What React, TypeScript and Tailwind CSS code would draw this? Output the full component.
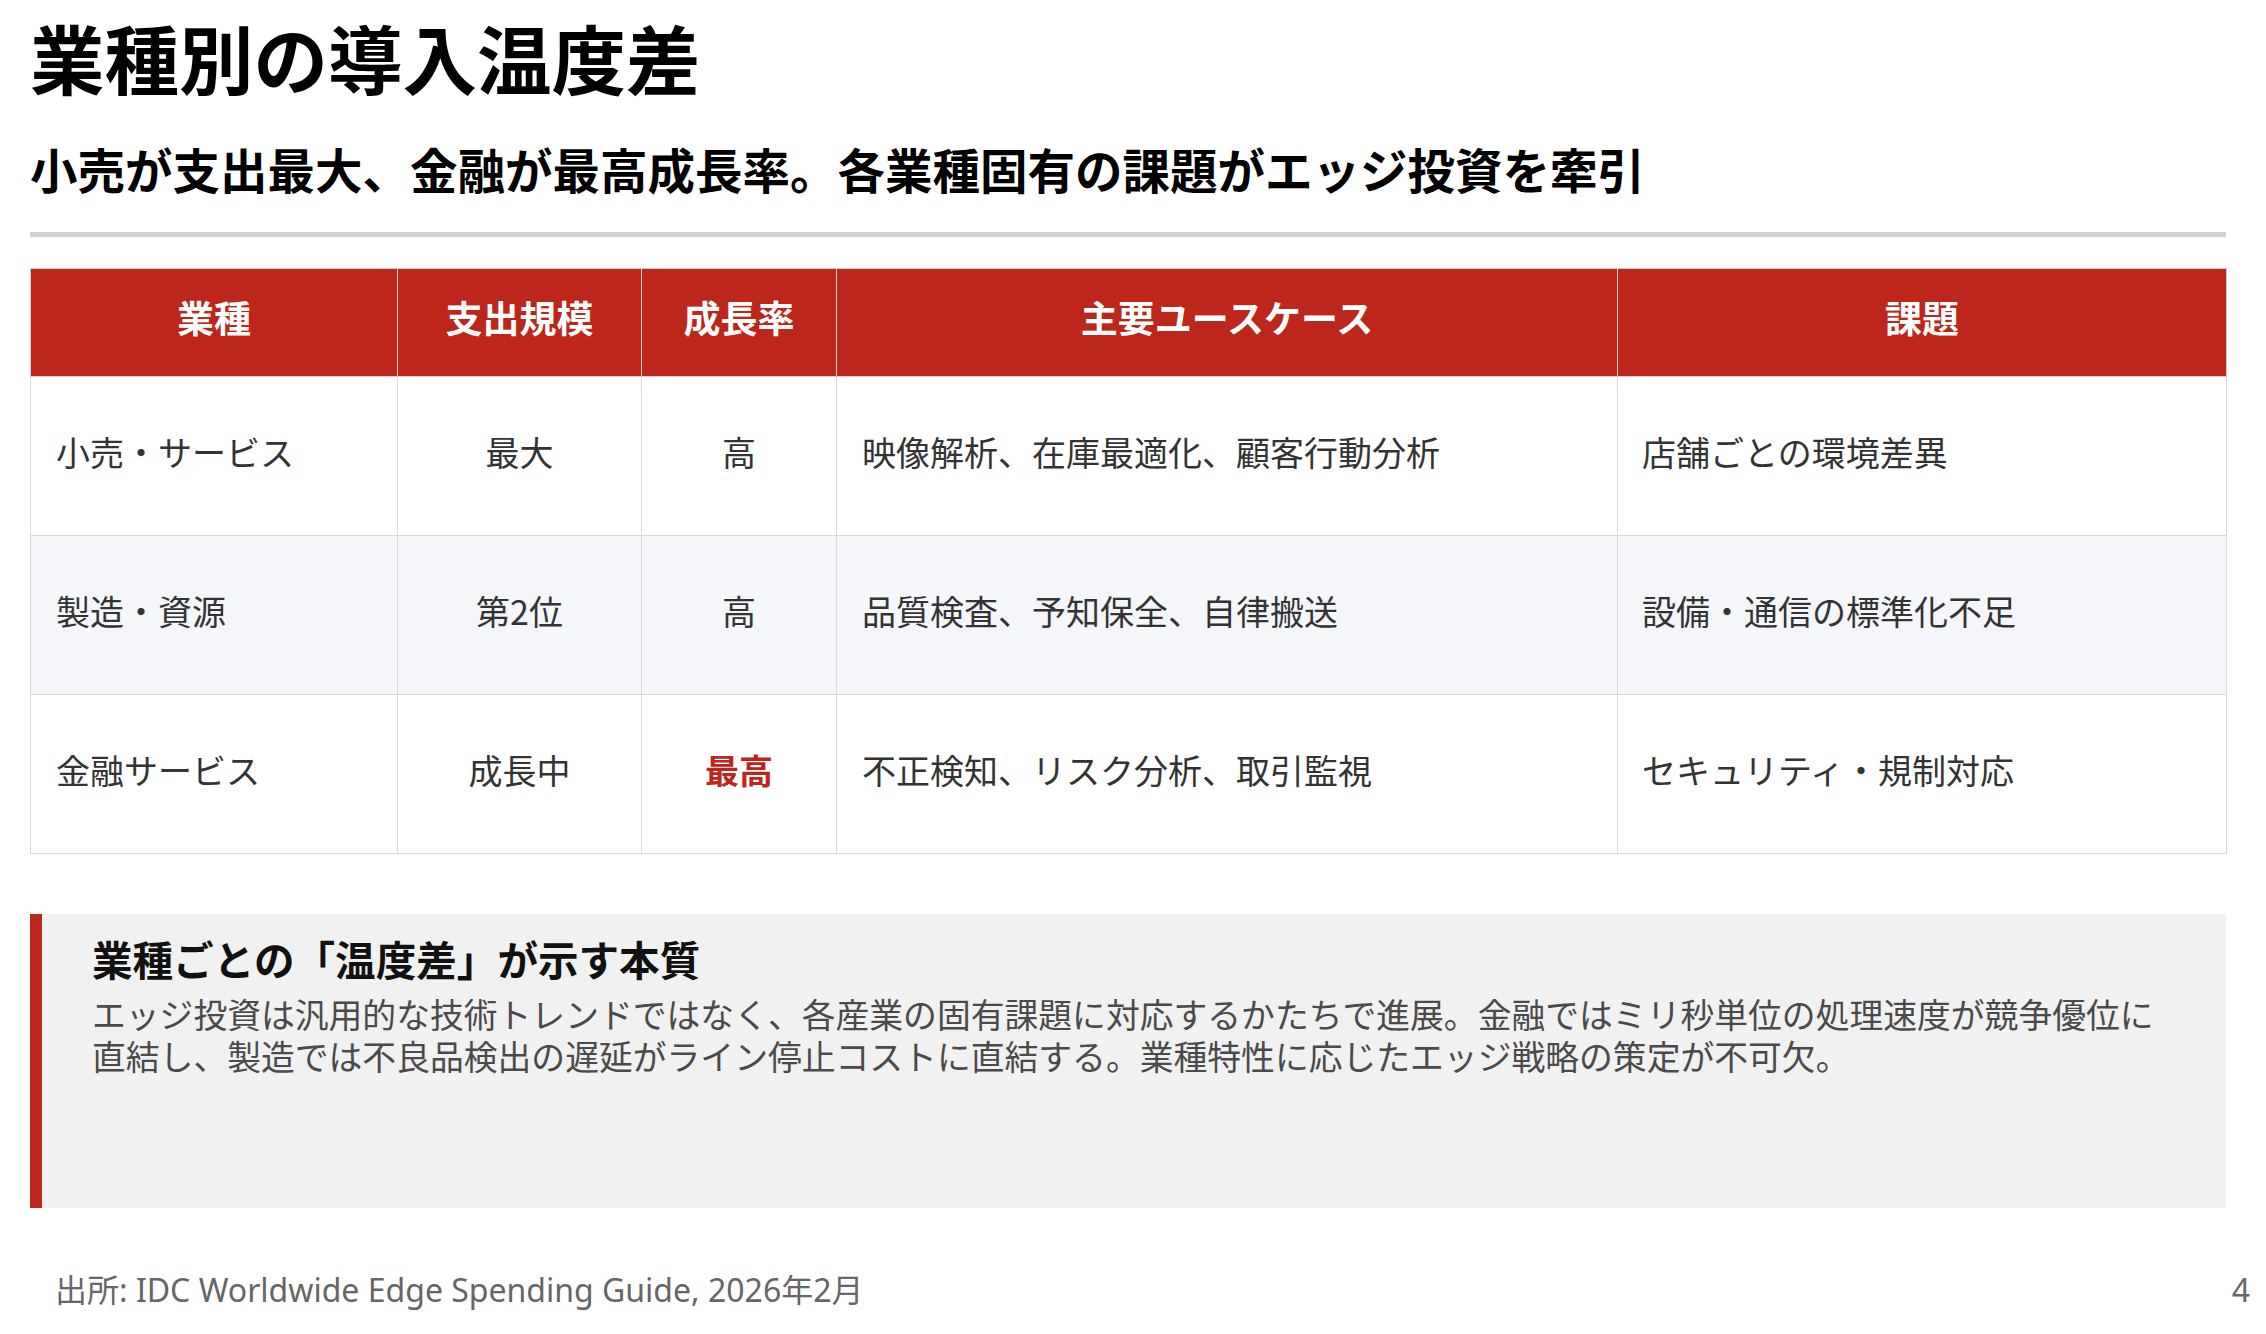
const rows = [
  {
    industry: '小売・サービス',
    spend: '最大',
    growth: '高',
    highlight: false,
    useCases: '映像解析、在庫最適化、顧客行動分析',
    issue: '店舗ごとの環境差異',
  },
  {
    industry: '製造・資源',
    spend: '第2位',
    growth: '高',
    highlight: false,
    useCases: '品質検査、予知保全、自律搬送',
    issue: '設備・通信の標準化不足',
  },
  {
    industry: '金融サービス',
    spend: '成長中',
    growth: '最高',
    highlight: true,
    useCases: '不正検知、リスク分析、取引監視',
    issue: 'セキュリティ・規制対応',
  },
]

const headers = ['業種', '支出規模', '成長率', '主要ユースケース', '課題']

export default function App() {
  return (
    <div className="flex h-[1334px] w-[2266px] flex-col overflow-hidden bg-white font-['Noto_Sans_CJK_JP',sans-serif]">
      <div className="pl-[30px] pr-[40px] pt-[12px]">
        <h1 className="text-[74.5px] font-bold leading-[89px] text-black">業種別の導入温度差</h1>
        <h2 className="mt-[38px] text-[47.5px] font-bold leading-[60px] text-black">
          小売が支出最大、金融が最高成長率。各業種固有の課題がエッジ投資を牽引
        </h2>
        <div className="mt-[33px] h-[5px] bg-[#d1d1d1]" />

        <table className="mt-[31px] w-full table-fixed border-collapse border border-[#d6d6d6]">
          <colgroup>
            <col className="w-[367px]" />
            <col className="w-[244px]" />
            <col className="w-[195px]" />
            <col className="w-[781px]" />
            <col className="w-[609px]" />
          </colgroup>
          <thead>
            <tr className="h-[108px] bg-[#bc261b]">
              {headers.map((h) => (
                <th
                  key={h}
                  className="border border-[#d0d0d0] pb-[9px] text-center text-[37px] font-bold text-white"
                >
                  {h}
                </th>
              ))}
            </tr>
          </thead>
          <tbody>
            {rows.map((r, i) => (
              <tr key={r.industry} className={`h-[159px] ${i === 1 ? 'bg-[#f5f6fa]' : 'bg-white'}`}>
                <td className="border border-[#d9d9d9] px-[25px] pb-[9px] text-[34px] text-[#333]">{r.industry}</td>
                <td className="border border-[#d9d9d9] pb-[9px] text-center text-[34px] text-[#333]">{r.spend}</td>
                <td
                  className={`border border-[#d9d9d9] pb-[9px] text-center text-[34px] ${
                    r.highlight ? 'font-bold text-[#bc261b]' : 'text-[#333]'
                  }`}
                >
                  {r.growth}
                </td>
                <td className="border border-[#d9d9d9] px-[25px] pb-[9px] text-[34px] text-[#333]">{r.useCases}</td>
                <td className="border border-[#d9d9d9] px-[24px] pb-[9px] text-[34px] text-[#333]">{r.issue}</td>
              </tr>
            ))}
          </tbody>
        </table>

        <div className="mt-[60px] h-[294px] border-l-[12px] border-[#bc261b] bg-[#f1f1f1] pl-[50px] pr-[50px] pt-[19px]">
          <h3 className="text-[40.6px] font-bold leading-[52px] text-[#111]">業種ごとの「温度差」が示す本質</h3>
          <p className="mt-[8px] text-[33.8px] leading-[42px] text-[#4a4a4a]">
            エッジ投資は汎用的な技術トレンドではなく、各産業の固有課題に対応するかたちで進展。金融ではミリ秒単位の処理速度が競争優位に直結し、製造では不良品検出の遅延がライン停止コストに直結する。業種特性に応じたエッジ戦略の策定が不可欠。
          </p>
        </div>
      </div>

      <div className="mt-[61px] flex items-center justify-between pl-[55px] pr-[16px] font-['Noto_Sans','Noto_Sans_CJK_JP',sans-serif] text-[32px] leading-[42px] text-[#666]">
        <span>出所: IDC Worldwide Edge Spending Guide, 2026年2月</span>
        <span>4</span>
      </div>
    </div>
  )
}
